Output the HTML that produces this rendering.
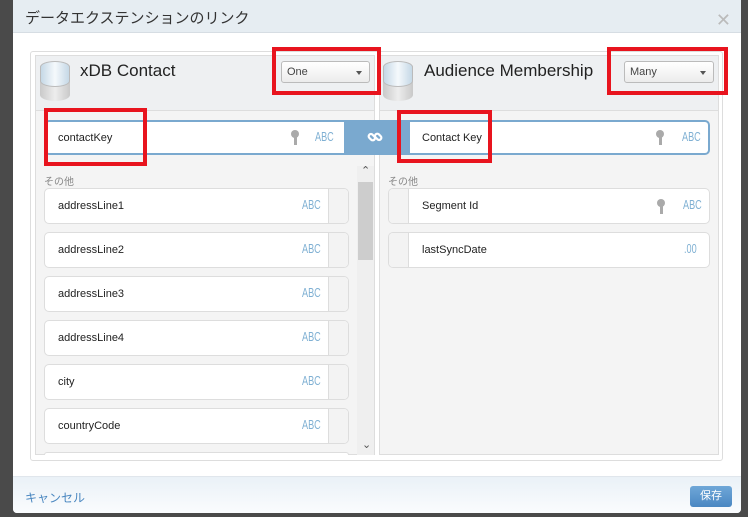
<!DOCTYPE html>
<html><head><meta charset="utf-8"><style>
*{box-sizing:border-box;margin:0;padding:0}
body{width:748px;height:517px;background:#4a4a4a;font-family:"Liberation Sans","Noto Sans CJK JP",sans-serif;position:relative;overflow:hidden}
.abs{position:absolute}
.modal{left:13px;top:0;width:728px;height:513px;background:#fff;border-radius:0 0 4px 4px}
.hdr{left:0;top:0;width:728px;height:33px;background:#e6edf2;border-bottom:1px solid #d6dde3}
.hdr span{position:absolute;left:12px;top:7px;font-size:15px;color:#333}
.close{right:10px;top:10px;font-size:18px;color:#bbb}
.outer{left:17px;top:51px;width:693px;height:410px;border:1px solid #ddd;border-radius:3px}
.sec{border:1px solid #ddd;background:#f4f4f4}
.shead{background:#eef0f2;border-bottom:1px solid #ddd}
.title{font-size:17px;color:#222}
.sel{height:22px;border:1px solid #bbb;border-radius:3px;background:linear-gradient(#fff,#ececec);font-size:11px;color:#444;padding:4px 5px}
.sel:after{content:"";position:absolute;right:7px;top:9px;border:3px solid transparent;border-top:4px solid #555}
.red{border:4px solid #e8141e;z-index:5}
.row{height:36px;background:#fff;border:1px solid #ddd;border-radius:5px;font-size:11px;color:#222;overflow:hidden}
.row .t{position:absolute;top:11px}
.abc{position:absolute;top:8px;font-size:13px;color:#7fb0d3;font-family:"Liberation Sans Narrow","Liberation Sans",sans-serif;transform:scaleX(.7);transform-origin:left}
.cell{position:absolute;top:0;width:20px;height:36px;background:#f3f3f3}
.lbl{font-size:10px;color:#888}
.key{position:absolute;width:4px;height:14px;top:10px}
.key:before{content:"";position:absolute;left:-2px;top:0;width:8px;height:8px;border-radius:50%;background:#aaa}
.key:after{content:"";position:absolute;left:1px;top:6px;width:3px;height:9px;background:#aaa}
</style></head><body>
<div class="abs modal">
 <div class="abs hdr"><span>データエクステンションのリンク</span><div class="abs close">✕</div></div>
 <div class="abs outer"></div>
 <div class="abs sec" style="left:22px;top:55px;width:340px;height:400px"></div>
 <div class="abs shead" style="left:23px;top:56px;width:338px;height:55px"></div>
 <div class="abs" style="left:27px;top:61px;width:30px;height:40px;border-radius:15px/6px;background:linear-gradient(90deg,#c9c9c9,#ededed 50%,#c9c9c9)"></div>
 <div class="abs" style="left:27px;top:61px;width:30px;height:26px;border-radius:15px/6px;background:linear-gradient(90deg,#c5d8e6,#f5f9fc 50%,#c5d8e6);border:1px solid #bbb"></div>
 <div class="abs title" style="left:67px;top:61px">xDB Contact</div>
 <div class="abs sel" style="left:268px;top:61px;width:89px">One</div>
 <div class="abs red" style="left:259px;top:47px;width:109px;height:48px"></div>
 <div class="abs sec" style="left:366px;top:55px;width:340px;height:400px"></div>
 <div class="abs shead" style="left:367px;top:56px;width:338px;height:55px"></div>
 <div class="abs" style="left:370px;top:61px;width:30px;height:40px;border-radius:15px/6px;background:linear-gradient(90deg,#c9c9c9,#ededed 50%,#c9c9c9)"></div>
 <div class="abs" style="left:370px;top:61px;width:30px;height:26px;border-radius:15px/6px;background:linear-gradient(90deg,#c5d8e6,#f5f9fc 50%,#c5d8e6);border:1px solid #bbb"></div>
 <div class="abs title" style="left:411px;top:61px">Audience Membership</div>
 <div class="abs sel" style="left:611px;top:61px;width:90px">Many</div>
 <div class="abs red" style="left:594px;top:47px;width:121px;height:48px"></div>

 <div class="abs" style="left:330px;top:120px;width:67px;height:35px;background:#7aa9cf"></div>
 <svg class="abs" style="left:354px;top:129px" width="16" height="16" viewBox="0 0 16 16"><g fill="none" stroke="#fff" stroke-width="2.2"><rect x="1.5" y="6" width="7" height="4.5" rx="2.2" transform="rotate(45 5 8)"/><rect x="7.5" y="5.5" width="7" height="4.5" rx="2.2" transform="rotate(45 11 8)"/></g></svg>
 <div class="abs" style="left:31px;top:120px;width:300px;height:35px;background:#fff;border:2px solid #7aa9cf;border-right:none;border-radius:5px 0 0 5px;font-size:11px;color:#222;padding:10px 12px">contactKey</div>
 <div class="key" style="left:280px;top:130px"></div>
 <div class="abc" style="left:302px;top:129px">ABC</div>
 <div class="abs red" style="left:31px;top:108px;width:103px;height:58px"></div>
 <div class="abs lbl" style="left:31px;top:173px">その他</div>
 <div class="abs" style="left:344px;top:166px;width:17px;height:289px;background:#efefef"></div>
 <div class="abs" style="left:345px;top:182px;width:15px;height:78px;background:#cdcdcd"></div>
 <div class="abs" style="left:348px;top:164px;font-size:11px;color:#555">⌃</div>
 <div class="abs" style="left:349px;top:438px;font-size:11px;color:#555">⌄</div>
 <div class="abs" style="left:31px;top:188px">
  <div class="abs row" style="top:0;width:305px;height:36px"><span class="t" style="left:13px">addressLine1</span><span class="abc" style="left:257px">ABC</span><div class="cell" style="left:283px;border-left:1px solid #ddd"></div></div>
  <div class="abs row" style="top:44px;width:305px"><span class="t" style="left:13px">addressLine2</span><span class="abc" style="left:257px">ABC</span><div class="cell" style="left:283px;border-left:1px solid #ddd"></div></div>
  <div class="abs row" style="top:88px;width:305px"><span class="t" style="left:13px">addressLine3</span><span class="abc" style="left:257px">ABC</span><div class="cell" style="left:283px;border-left:1px solid #ddd"></div></div>
  <div class="abs row" style="top:132px;width:305px"><span class="t" style="left:13px">addressLine4</span><span class="abc" style="left:257px">ABC</span><div class="cell" style="left:283px;border-left:1px solid #ddd"></div></div>
  <div class="abs row" style="top:176px;width:305px"><span class="t" style="left:13px">city</span><span class="abc" style="left:257px">ABC</span><div class="cell" style="left:283px;border-left:1px solid #ddd"></div></div>
  <div class="abs row" style="top:220px;width:305px"><span class="t" style="left:13px">countryCode</span><span class="abc" style="left:257px">ABC</span><div class="cell" style="left:283px;border-left:1px solid #ddd"></div></div>
  <div class="abs row" style="top:264px;width:305px;height:3px;border-bottom:none;border-radius:5px 5px 0 0"></div>
 </div>

 <div class="abs" style="left:397px;top:120px;width:300px;height:35px;background:#fff;border:2px solid #7aa9cf;border-left:none;border-radius:0 5px 5px 0;font-size:11px;color:#222;padding:10px 12px">Contact Key</div>
 <div class="key" style="left:645px;top:130px"></div>
 <div class="abc" style="left:669px;top:129px">ABC</div>
 <div class="abs red" style="left:384px;top:110px;width:95px;height:53px"></div>
 <div class="abs lbl" style="left:375px;top:173px">その他</div>
 <div class="abs row" style="left:375px;top:188px;width:322px"><div class="cell" style="left:0;border-right:1px solid #ddd"></div><span class="t" style="left:33px">Segment Id</span><div class="key" style="left:270px"></div><span class="abc" style="left:294px">ABC</span></div>
 <div class="abs row" style="left:375px;top:232px;width:322px"><div class="cell" style="left:0;border-right:1px solid #ddd"></div><span class="t" style="left:33px">lastSyncDate</span><span class="abc" style="left:295px">.00</span></div>
 <div class="abs" style="left:0;top:476px;width:728px;height:37px;background:linear-gradient(#eaf1f7,#fafcfe);border-top:1px solid #e0e6ec;border-radius:0 0 4px 4px"></div>
 <div class="abs" style="left:12px;top:489px;font-size:12px;color:#4a87c0">キャンセル</div>
 <div class="abs" style="left:677px;top:486px;width:42px;height:21px;border-radius:3px;background:linear-gradient(#6fa7d8,#4a87c2);color:#fff;font-size:11px;text-align:center;line-height:21px">保存</div>
</div>
</body></html>
